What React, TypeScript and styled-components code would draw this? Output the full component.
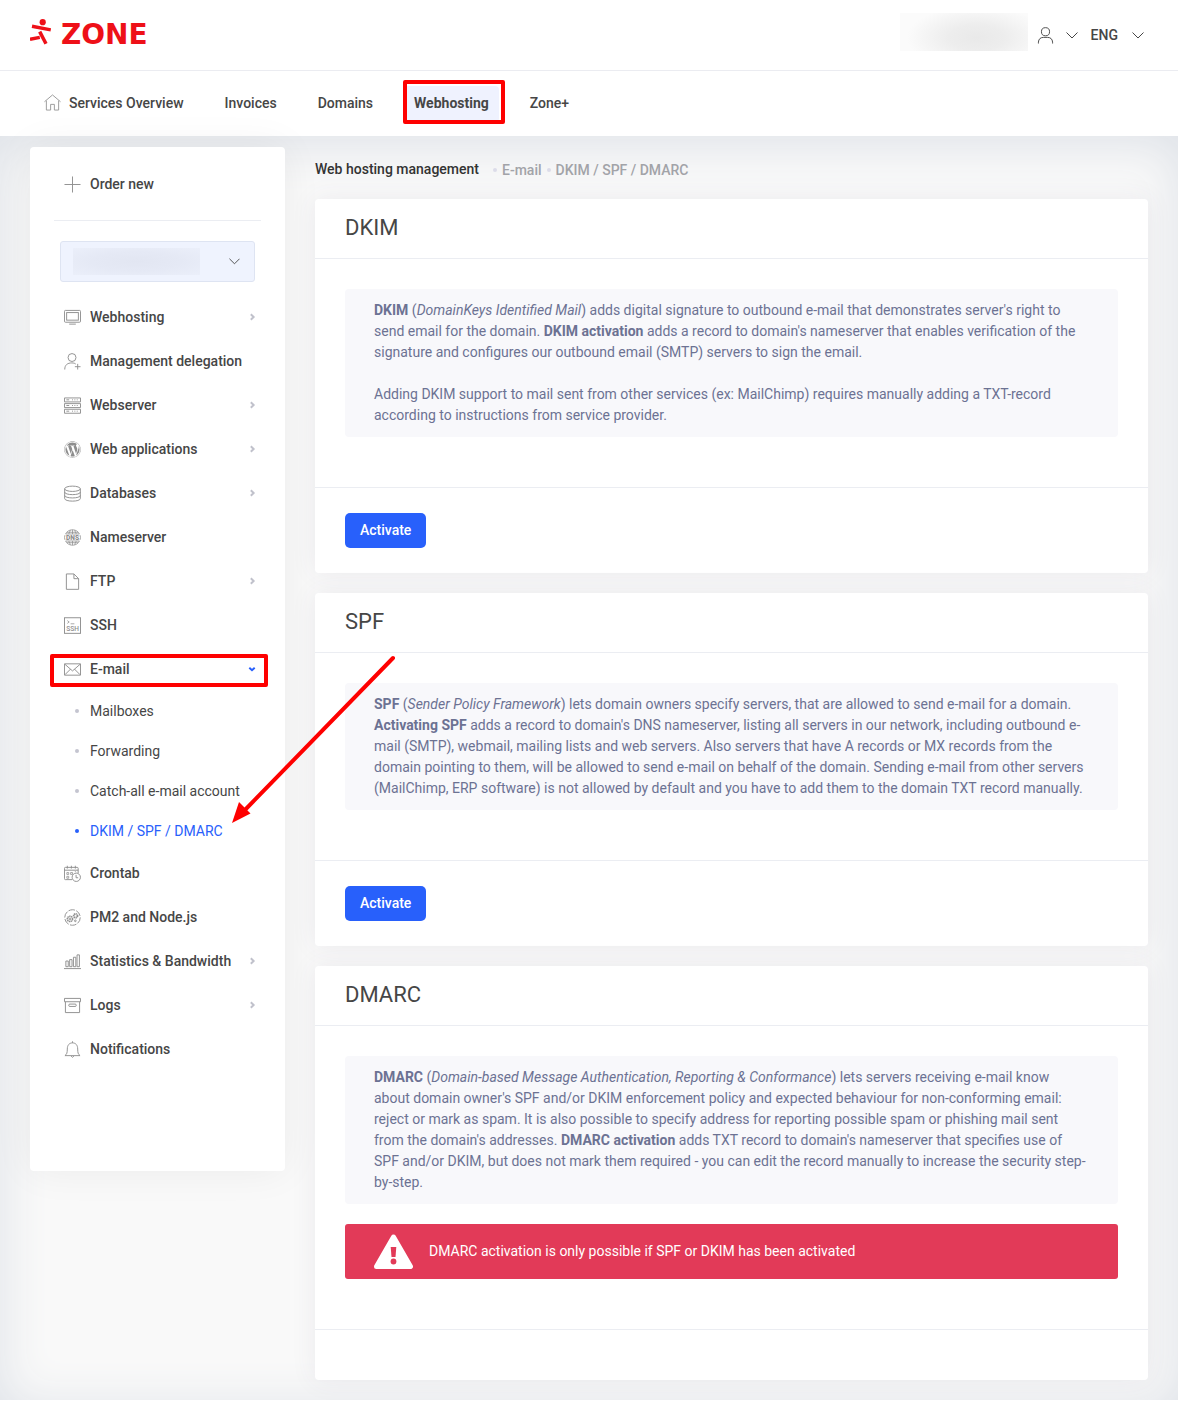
import React from "react";
import styled, { createGlobalStyle, css } from "styled-components";
import { FaWordpress } from "react-icons/fa";

const GlobalStyle = createGlobalStyle`
  *, *::before, *::after { box-sizing: border-box; }
  body {
    margin: 0;
    background: #fff;
    font: 400 14px/21px Roboto, "Liberation Sans", sans-serif;
    color: #464646;
  }
  h1, h2, p, ul { margin: 0; padding: 0; }
  ul { list-style: none; }
  a { color: inherit; text-decoration: none; }
  button, select { font: inherit; cursor: pointer; }
`;

const Header = styled.header`
  display: flex;
  align-items: center;
  justify-content: space-between;
  height: 71px;
  padding: 0 34px 0 30px;
  border-bottom: 1px solid #ebecf1;
`;

const Brand = styled.a`
  display: flex;
  align-items: center;
  gap: 10px;
  height: 64px;
  align-self: flex-start;
  color: #ee1018;
`;

const BrandName = styled.span`
  font: 700 28px/32px "DejaVu Sans", sans-serif;
  padding-top: 6px;
`;

const HeaderTools = styled.div`
  display: flex;
  align-items: center;
  gap: 13px;
`;

const HiddenAccount = styled.span`
  width: 128px;
  height: 38px;
  margin: 0 -4px 6px 0;
  background: radial-gradient(ellipse 70px 32px at 60% 65%, #e9e9e9 0%, #ededed 40%, #fbfbfb 100%);
`;

const ToolButton = styled.button`
  display: flex;
  align-items: center;
  gap: 12px;
  padding: 0;
  border: 0;
  background: none;
  color: #464646;
  font-weight: 500;
  &:last-child { gap: 14px; }
`;

const TopNav = styled.nav`
  display: flex;
  align-items: center;
  gap: 21px;
  height: 65px;
  padding: 0 34px;
`;

const NavLink = styled.a<{ $active?: boolean }>`
  position: relative;
  display: flex;
  align-items: center;
  gap: 8px;
  height: 36px;
  padding: 0 10px;
  border-radius: 4px;
  font-weight: ${(p) => (p.$active ? 700 : 500)};
  background: ${(p) => (p.$active ? "#eff2fe" : "none")};
  > svg { color: #999; margin-bottom: 3px; }
`;

const marker = css`
  position: absolute;
  border: 4px solid #fe0000;
  border-radius: 2px;
  pointer-events: none;
`;

const NavMarker = styled.span`
  ${marker}
  inset: -6px -6px -2px -1px;
`;

const RowMarker = styled.span`
  ${marker}
  inset: 7px 17px 4px 20px;
`;

const Page = styled.div`
  display: flex;
  align-items: flex-start;
  gap: 30px;
  padding: 11px 30px 20px;
  background: #f9f9f9;
  box-shadow: inset 0 8px 50px #dde1e7;
`;

const panel = css`
  background: #fff;
  border-radius: 4px;
`;

const Sidebar = styled.aside`
  ${panel}
  flex: none;
  width: 255px;
  padding: 15px 0 100px;
  box-shadow: 0 0 40px rgba(0, 0, 0, 0.06);
`;

const Divider = styled.hr`
  margin: 14px 24px 20px;
  border: 0;
  border-top: 1px solid #ebedf2;
`;

const DomainPicker = styled.div`
  display: grid;
  align-items: center;
  margin: 0 30px 13px;
  > * { grid-area: 1 / 1; }
  > svg { justify-self: end; margin-right: 15px; pointer-events: none; }
`;

const DomainSelect = styled.select`
  width: 100%;
  height: 41px;
  appearance: none;
  border: 1px solid #dee4f2;
  border-radius: 3px;
  background: #eff3fe;
`;

const HiddenDomain = styled.span`
  width: 127px;
  height: 27px;
  margin-left: 13px;
  background: radial-gradient(ellipse at center, #e2e6f2 0%, #e5e9f5 50%, #ebeffa 100%);
  pointer-events: none;
`;

const MenuLink = styled.a`
  position: relative;
  display: flex;
  align-items: center;
  gap: 9px;
  height: 44px;
  padding: 0 29px 0 34px;
  font-weight: 500;
  > svg:first-child { color: #8e8e8e; flex: none; }
`;

const MenuLabel = styled.span`
  flex: 1;
  white-space: nowrap;
`;

const SubItem = styled.li`
  position: relative;
`;

const SubLink = styled.a<{ $active?: boolean }>`
  display: flex;
  align-items: center;
  gap: 11px;
  height: 40px;
  padding-left: 45px;
  color: ${(p) => (p.$active ? "#2860fb" : "#464646")};
  &::before {
    content: "";
    width: 4px;
    height: 4px;
    border-radius: 50%;
    background: ${(p) => (p.$active ? "#2860fb" : "#c4c5d0")};
  }
`;

const Arrow = styled.svg`
  position: absolute;
  left: 200px;
  bottom: 24px;
  z-index: 2;
  pointer-events: none;
`;

const Main = styled.main`
  flex: 1;
  min-width: 0;
  display: grid;
  gap: 20px;
`;

const Breadcrumbs = styled.div`
  display: flex;
  align-items: center;
  height: 32px;
  padding-top: 12px;
  color: #a2a3a8;
  font-weight: 500;
`;

const PageTitle = styled.h1`
  margin-right: 9px;
  font-size: 14px;
  font-weight: 500;
  color: #333;
`;

const Crumb = styled.a`
  display: flex;
  align-items: center;
  gap: 5px;
  padding: 2px 0 0 5px;
  &::before {
    content: "";
    width: 4px;
    height: 4px;
    border-radius: 50%;
    background: #dcdce9;
  }
`;

const Card = styled.section`
  ${panel}
  box-shadow: 0 0 26px rgba(82, 63, 105, 0.08);
`;

const CardHeader = styled.header`
  display: flex;
  align-items: center;
  height: 60px;
  padding: 0 30px 1px;
  border-bottom: 1px solid #ebedf2;
`;

const CardTitle = styled.h2`
  font-size: 22px;
  line-height: 26px;
  font-weight: 400;
`;

const CardBody = styled.div`
  padding: 30px 30px 50px;
  display: grid;
  gap: 20px;
`;

const Info = styled.div`
  padding: 11px 31px 11px 29px;
  border-radius: 4px;
  background: #f8f8fb;
  color: #6c7293;
  strong { font-weight: 700; }
  p + p { margin-top: 21px; }
`;

const Alert = styled.div`
  display: flex;
  align-items: center;
  gap: 16px;
  height: 55px;
  padding: 0 29px;
  border-radius: 3px;
  background: #e23a58;
  color: #fff;
`;

const CardFooter = styled.footer`
  padding: 25px 30px;
  border-top: 1px solid #ebedf2;
`;

const PrimaryButton = styled.button`
  display: block;
  height: 35px;
  padding: 0 15px;
  border: 0;
  border-radius: 5px;
  background: #2860fb;
  color: #fff;
  font-weight: 500;
`;

const Glyph = ({ children }: { children: React.ReactNode }) => (
  <svg width="17" height="17" viewBox="0 0 18 18" fill="none" stroke="currentColor" strokeWidth="1" aria-hidden="true">
    {children}
  </svg>
);

const ThinChevron = ({ width = 12 }: { width?: number }) => (
  <svg width={width} height="7" viewBox="0 0 12 7" fill="none" stroke="#464646" aria-hidden="true">
    <path d="M.5.5 6 6l5.500-5.500" />
  </svg>
);

const RowChevron = ({ open }: { open?: boolean }) => (
  <svg width="8" height="8" viewBox="0 0 8 8" fill="none" stroke={open ? "#2860fb" : "#c0c1cb"} strokeWidth="2" aria-hidden="true">
    <path d={open ? "M1.300 2.800 4 5.200 6.700 2.800" : "M2.800 1.300 5.600 4 2.800 6.700"} />
  </svg>
);

const Runner = () => (
  <svg width="21" height="26" viewBox="0 0 21 26" fill="none" stroke="#ee1018" strokeWidth="3.500" aria-hidden="true">
    <circle cx="12.700" cy="3.200" r="3.100" fill="#ee1018" stroke="none" />
    <path d="M2 7.300 20.800 10.900M9.700 12.600 16 24.800M0 20.400 9.800 18.400" />
  </svg>
);

const icons: Record<string, React.ReactNode> = {
  home: <Glyph><path d="M.5 8.200 9 1l8.500 7.200M2.500 7v10h4.500v-6h4v6h4.500V7" /></Glyph>,
  user: <Glyph><circle cx="9" cy="5" r="4.300" /><path d="M1.500 17.500v-1.500a5.500 5.500 0 0 1 5.500-5h4a5.500 5.500 0 0 1 5.500 5v1.500" /></Glyph>,
  plus: <Glyph><path d="M9 .5v17M.5 9h17" /></Glyph>,
  screen: <Glyph><rect x=".5" y="1.500" width="17" height="12.500" rx="1" /><rect x="2.800" y="3.800" width="12.400" height="8" /><path d="M5.500 16h7" /></Glyph>,
  delegate: <Glyph><circle cx="8.500" cy="4.800" r="4.200" /><path d="M.8 17.500c0-5 3-7 7.500-7 2 0 3.500.5 4.200 1.300M11.500 14.500h6M14.500 11.500v6" /></Glyph>,
  server: <Glyph><path d="M.5 1h17v4.200H.5zM.5 7h17v4.200H.5zM.5 13h17v4.200H.5z" /><path d="M2.500 3h3M8.500 3h1M11 3h1M13.500 3h1M2.500 9h3M8.500 9h1M11 9h1M13.500 9h1M2.500 15h3M8.500 15h1M11 15h1M13.500 15h1" /></Glyph>,
  wordpress: <FaWordpress size={17} />,
  database: <Glyph><ellipse cx="9" cy="4" rx="8.300" ry="2.800" /><path d="M.7 4v10.300c0 3.700 16.600 3.700 16.600 0V4M.7 7.500c0 3.600 16.600 3.600 16.600 0M.7 11c0 3.600 16.600 3.600 16.600 0" /></Glyph>,
  dns: (
    <Glyph>
      <path d="M1.700 5.300a8.200 8.200 0 0 1 14.600 0zM1.700 12.700a8.200 8.200 0 0 0 14.600 0zM9 .8v4.500M9 12.700v4.500M6.800 1.200 5 5.300M11.200 1.200 13 5.300M5 12.700l1.800 4M13 12.700l-1.800 4M3 3.500h12M3 14.500h12M1 6.500q-1 2.500 0 5M17 6.500q1 2.500 0 5" strokeWidth=".8" />
      <text x="9" y="11.500" textAnchor="middle" fontSize="7" fontWeight="900" fill="currentColor" stroke="none">DNS</text>
    </Glyph>
  ),
  file: <Glyph><path d="M2.500 1h8l5 5v11.300h-13zM10.500 1v5h5" /></Glyph>,
  ssh: (
    <Glyph>
      <rect x=".5" y=".8" width="17" height="16.500" />
      <path d="M3.500 3.800 5.500 5.300l-2 1.500M7 7.200h4" strokeWidth=".8" />
      <text x="9" y="15" textAnchor="middle" fontSize="7" fontWeight="500" fill="currentColor" stroke="none">SSH</text>
    </Glyph>
  ),
  mail: <Glyph><path d="M.5 3h17v12H.5zM1 3.500l8 7 8-7M1 14.500l6-6M17 14.500l-6-6" /></Glyph>,
  cron: <Glyph><path d="M8.500 15.500h-7q-1 0-1-1v-11q0-1 1-1h12.500q1 0 1 1v5M.5 5.500h14.500M3.500.8v3M7.800.8v3M12 .8v3" /><path d="M3 8h2v2H3zM7 8h2v2H7zM3 12h2v2H3zM11.500 7h1" strokeWidth=".8" /><circle cx="13" cy="13" r="4.400" /><path d="M12.800 10.500v3h2.200" /></Glyph>,
  gears: <Glyph><circle cx="9" cy="9" r="8.200" strokeDasharray="7 1.500" /><circle cx="6.300" cy="10.500" r="2.800" strokeDasharray="1.500 .5" strokeWidth="1.600" /><circle cx="6.300" cy="10.500" r="1" /><circle cx="12.300" cy="7.200" r="2" strokeDasharray="1.200 .5" strokeWidth="2" /><circle cx="12" cy="12.500" r=".9" /></Glyph>,
  stats: <Glyph><path d="M0 16.500h18M2 14.500v-6h2.500v6zM6 14.500v-7.500h2.500v7.500zM10 14.500v-10h2.500v10zM13.800 14.500v-12.500h2.500v12.500z" /></Glyph>,
  box: <Glyph><path d="M.5 1.500h17v3.500H.5zM1.500 5v11.500h15v-11.500" /><rect x="5" y="7.500" width="8" height="2.500" rx="1.200" /></Glyph>,
  bell: <Glyph><path d="M1 15.500c2-1.500 2.500-3 2.500-7C3.500 4.500 5.500 2 9 2s5.500 2.500 5.500 6.500c0 4 .5 5.500 2.500 7zM7.500 16q1.500 2.500 3 0M9 .3v1.700" /></Glyph>,
};

interface MenuEntry {
  label: string;
  icon: string;
  nested?: boolean;
  children?: string[];
}

const menu: MenuEntry[] = [
  { label: "Webhosting", icon: "screen", nested: true },
  { label: "Management delegation", icon: "delegate" },
  { label: "Webserver", icon: "server", nested: true },
  { label: "Web applications", icon: "wordpress", nested: true },
  { label: "Databases", icon: "database", nested: true },
  { label: "Nameserver", icon: "dns" },
  { label: "FTP", icon: "file", nested: true },
  { label: "SSH", icon: "ssh" },
  { label: "E-mail", icon: "mail", nested: true, children: ["Mailboxes", "Forwarding", "Catch-all e-mail account", "DKIM / SPF / DMARC"] },
  { label: "Crontab", icon: "cron" },
  { label: "PM2 and Node.js", icon: "gears" },
  { label: "Statistics & Bandwidth", icon: "stats", nested: true },
  { label: "Logs", icon: "box", nested: true },
  { label: "Notifications", icon: "bell" },
];

const PointerArrow = () => (
  <Arrow width="170" height="174" viewBox="0 0 170 174" aria-hidden="true">
    <path d="M163 5 12 160" stroke="#fe0000" strokeWidth="4" strokeLinecap="round" />
    <path d="M2 170 9 149 20.500 160.500Z" fill="#fe0000" />
  </Arrow>
);

const MenuItem = ({ entry }: { entry: MenuEntry }) => (
  <li>
    <MenuLink href="#">
      {icons[entry.icon]}
      <MenuLabel>{entry.label}</MenuLabel>
      {entry.nested && <RowChevron open={!!entry.children} />}
      {entry.children && <RowMarker />}
    </MenuLink>
    {entry.children && (
      <ul>
        {entry.children.map((child, i, all) => {
          const active = i === all.length - 1;
          return (
            <SubItem key={child}>
              <SubLink href="#" $active={active}>{child}</SubLink>
              {active && <PointerArrow />}
            </SubItem>
          );
        })}
      </ul>
    )}
  </li>
);

const SettingsCard = ({ title, children, action }: { title: string; children: React.ReactNode; action?: string }) => (
  <Card>
    <CardHeader><CardTitle>{title}</CardTitle></CardHeader>
    <CardBody>{children}</CardBody>
    <CardFooter>{action && <PrimaryButton type="button">{action}</PrimaryButton>}</CardFooter>
  </Card>
);

export default function App() {
  return (
    <>
      <GlobalStyle />
      <Header>
        <Brand href="#">
          <Runner />
          <BrandName>ZONE</BrandName>
        </Brand>
        <HeaderTools>
          <HiddenAccount />
          <ToolButton type="button" aria-label="Account">
            {icons.user}
            <ThinChevron />
          </ToolButton>
          <ToolButton type="button">
            ENG
            <ThinChevron />
          </ToolButton>
        </HeaderTools>
      </Header>
      <TopNav>
        <NavLink href="#">{icons.home}Services Overview</NavLink>
        <NavLink href="#">Invoices</NavLink>
        <NavLink href="#">Domains</NavLink>
        <NavLink href="#" $active>Webhosting<NavMarker /></NavLink>
        <NavLink href="#">Zone+</NavLink>
      </TopNav>
      <Page>
        <Sidebar>
          <MenuLink href="#">{icons.plus}<MenuLabel>Order new</MenuLabel></MenuLink>
          <Divider />
          <DomainPicker>
            <DomainSelect aria-label="Domain" />
            <HiddenDomain />
            <ThinChevron width={11} />
          </DomainPicker>
          <ul>
            {menu.map((entry) => <MenuItem key={entry.label} entry={entry} />)}
          </ul>
        </Sidebar>
        <Main>
          <Breadcrumbs>
            <PageTitle>Web hosting management</PageTitle>
            <Crumb href="#">E-mail</Crumb>
            <Crumb href="#">DKIM / SPF / DMARC</Crumb>
          </Breadcrumbs>
          <SettingsCard title="DKIM" action="Activate">
            <Info>
              <p>
                <strong>DKIM</strong> (<em>DomainKeys Identified Mail</em>) adds digital signature to outbound e-mail that demonstrates server's right to send email for the domain. <strong>DKIM activation</strong> adds a record to domain's nameserver that enables verification of the signature and configures our outbound email (SMTP) servers to sign the email.
              </p>
              <p>
                Adding DKIM support to mail sent from other services (ex: MailChimp) requires manually adding a TXT-record according to instructions from service provider.
              </p>
            </Info>
          </SettingsCard>
          <SettingsCard title="SPF" action="Activate">
            <Info>
              <p>
                <strong>SPF</strong> (<em>Sender Policy Framework</em>) lets domain owners specify servers, that are allowed to send e-mail for a domain. <strong>Activating SPF</strong> adds a record to domain's DNS nameserver, listing all servers in our network, including outbound e-mail (SMTP), webmail, mailing lists and web servers. Also servers that have A records or MX records from the domain pointing to them, will be allowed to send e-mail on behalf of the domain. Sending e-mail from other servers (MailChimp, ERP software) is not allowed by default and you have to add them to the domain TXT record manually.
              </p>
            </Info>
          </SettingsCard>
          <SettingsCard title="DMARC">
            <Info>
              <p>
                <strong>DMARC</strong> (<em>Domain-based Message Authentication, Reporting &amp; Conformance</em>) lets servers receiving e-mail know about domain owner's SPF and/or DKIM enforcement policy and expected behaviour for non-conforming email: reject or mark as spam. It is also possible to specify address for reporting possible spam or phishing mail sent from the domain's addresses. <strong>DMARC activation</strong> adds TXT record to domain's nameserver that specifies use of SPF and/or DKIM, but does not mark them required - you can edit the record manually to increase the security step-by-step.
              </p>
            </Info>
            <Alert role="alert">
              <svg width="39" height="36" viewBox="0 0 39 36" aria-hidden="true">
                <path d="M19.500 3 36.500 32.500H2.500Z" fill="#fff" stroke="#fff" strokeWidth="5" strokeLinejoin="round" />
                <path d="M16.700 13h5.600l-.8 10h-4z" fill="#e23a58" />
                <circle cx="19.500" cy="27.500" r="2.900" fill="#e23a58" />
              </svg>
              DMARC activation is only possible if SPF or DKIM has been activated
            </Alert>
          </SettingsCard>
        </Main>
      </Page>
    </>
  );
}
